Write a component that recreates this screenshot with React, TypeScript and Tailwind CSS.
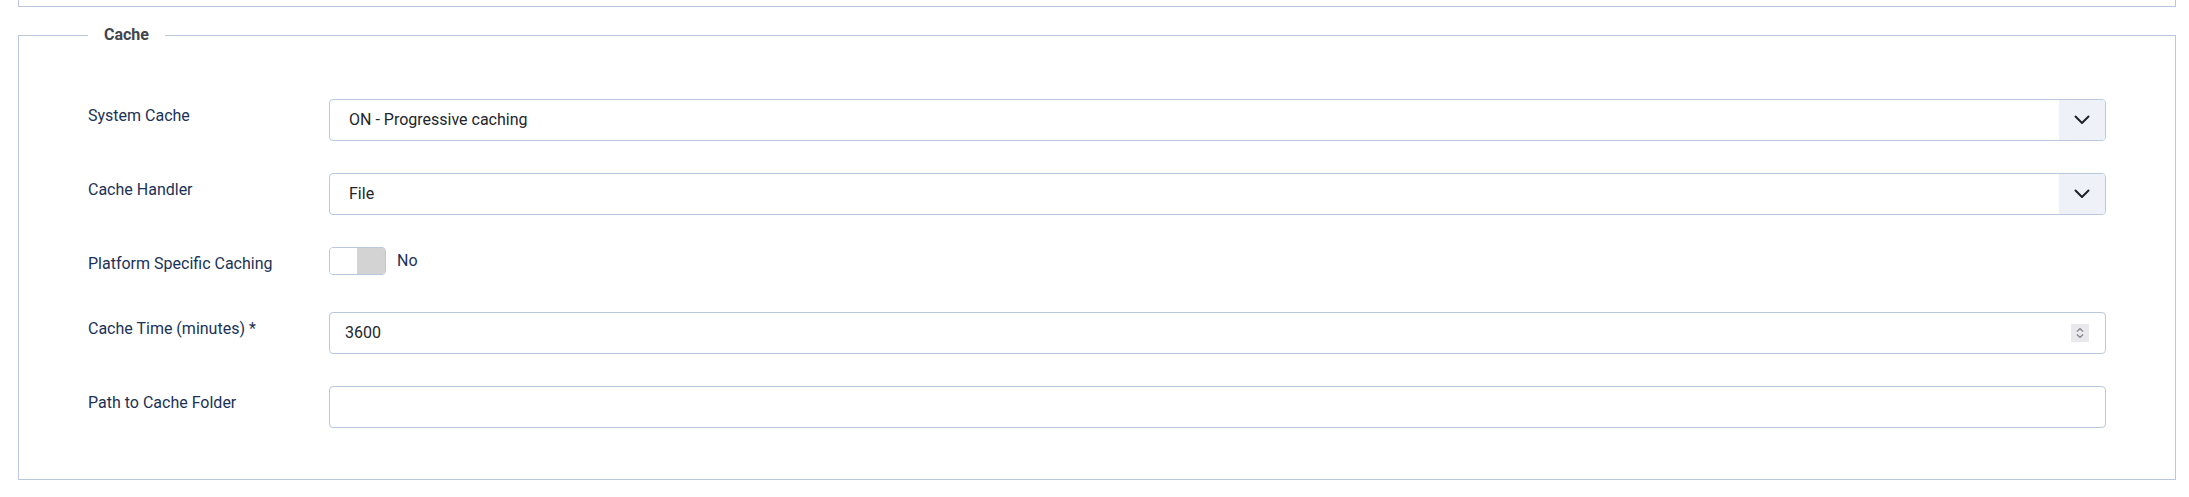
import React from "react";

const labelCls = "pt-[5px] text-base leading-6 text-[#1b3256]";

function Row({ label, children }: { label: string; children: React.ReactNode }) {
  return (
    <div className="grid grid-cols-[241px_1fr] items-start">
      <div className={labelCls}>{label}</div>
      <div>{children}</div>
    </div>
  );
}

function Chevron() {
  return (
    <svg width="16" height="10" viewBox="0 0 16 10" fill="none">
      <path d="M1.5 1.5 L8 8 L14.5 1.5" stroke="#1f2226" strokeWidth="2" strokeLinecap="round" strokeLinejoin="round" />
    </svg>
  );
}

function Select({ value }: { value: string }) {
  return (
    <div className="flex h-[42px] items-center overflow-hidden rounded border border-[#b9c8de] bg-white text-base text-[#22262a]">
      <span className="pl-[19px]">{value}</span>
      <div className="ml-auto flex h-full w-[46px] items-center justify-center bg-[#eef2f8]">
        <Chevron />
      </div>
    </div>
  );
}

function Spinner() {
  return (
    <div className="mr-[16px] ml-auto flex h-[18px] w-[18px] items-center justify-center bg-[#e9e9ed]">
      <svg width="18" height="18" viewBox="0 0 18 18" fill="none">
        <path d="M6 7.5 L9 4.5 L12 7.5" stroke="#7d7d86" strokeWidth="1.2" />
        <path d="M6 10.5 L9 13.5 L12 10.5" stroke="#7d7d86" strokeWidth="1.2" />
      </svg>
    </div>
  );
}

export default function App() {
  return (
    <div className="min-h-[497px] w-full bg-white pr-[13px] pl-[18px] font-['Roboto',sans-serif]">
      <div className="h-[7px] border-x border-b border-[#b9c8de]" />
      <fieldset className="mt-[16px] border border-[#b9c8de] px-[69px] pt-[52px] pb-[51px]">
        <legend className="px-4 text-base leading-6 font-bold text-[#41464b]">Cache</legend>
        <div className="flex flex-col gap-8">
          <Row label="System Cache">
            <Select value="ON - Progressive caching" />
          </Row>
          <Row label="Cache Handler">
            <Select value="File" />
          </Row>
          <Row label="Platform Specific Caching">
            <div className="flex h-[33px] items-start">
              <div className="flex h-[28px] items-center">
                <div className="flex h-[28px] w-[57px] overflow-hidden rounded border border-[#b9c8de]">
                  <div className="w-[27px] bg-white" />
                  <div className="flex-1 bg-[#d3d3d3]" />
                </div>
                <span className="ml-[11px] text-base leading-6 text-[#1b3256]">No</span>
              </div>
            </div>
          </Row>
          <Row label="Cache Time (minutes) *">
            <div className="flex h-[42px] items-center rounded border border-[#b9c8de] bg-white text-base text-[#22262a]">
              <span className="pl-[15px]">3600</span>
              <Spinner />
            </div>
          </Row>
          <Row label="Path to Cache Folder">
            <div className="h-[42px] rounded border border-[#b9c8de] bg-white" />
          </Row>
        </div>
      </fieldset>
    </div>
  );
}
